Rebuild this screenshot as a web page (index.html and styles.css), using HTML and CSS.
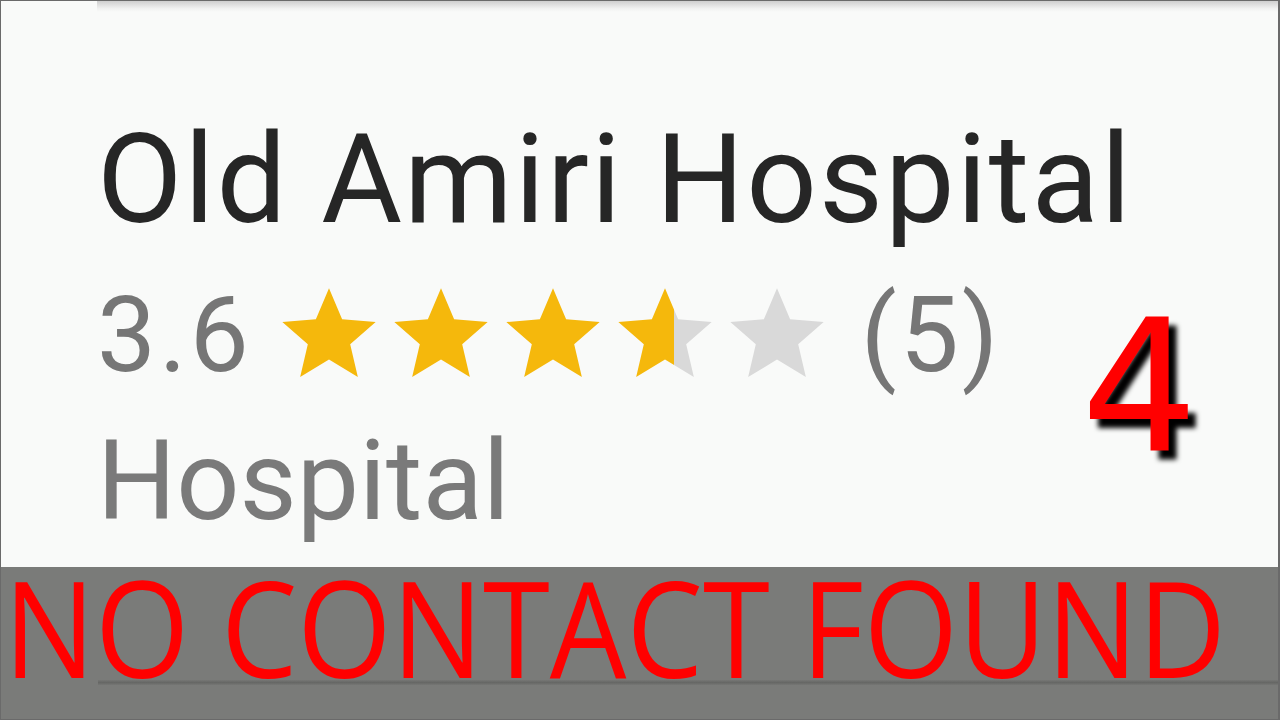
FILE: index.html
```html
<!DOCTYPE html>
<html>
	<head>
		<title>Old Amiri Hospital</title>
		<link rel="stylesheet" href="styles.css">
	</head>
	<body>
		<div class="screen">
			<div class="card">
				<div class="card-edge"></div>
				<h1 class="name">Old Amiri Hospital</h1>
				<div class="rating">
					<span class="score">3.6</span>
					<span class="stars">
						<svg class="star" viewBox="0 0 24 24"><path class="on" d="M12 17.27L18.180 21l-1.64-7.03L22 9.24l-7.19-.61L12 2 9.19 8.63 2 9.24l5.46 4.73L5.82 21z"/></svg>
						<svg class="star" viewBox="0 0 24 24"><path class="on" d="M12 17.27L18.18 21l-1.64-7.03L22 9.24l-7.19-.61L12 2 9.19 8.63 2 9.24l5.46 4.73L5.82 21z"/></svg>
						<svg class="star" viewBox="0 0 24 24"><path class="on" d="M12 17.27L18.18 21l-1.64-7.03L22 9.24l-7.19-.61L12 2 9.19 8.63 2 9.24l5.46 4.73L5.82 21z"/></svg>
						<svg class="star" viewBox="0 0 24 24">
							<defs>
								<linearGradient id="part" x1="0" y1="0" x2="1" y2="0">
									<stop offset="0.6" stop-color="#f5b80c"/>
									<stop offset="0.6" stop-color="#d9d9d9"/>
								</linearGradient>
							</defs>
							<path fill="url(#part)" d="M12 17.27L18.18 21l-1.64-7.03L22 9.24l-7.19-.61L12 2 9.19 8.63 2 9.24l5.46 4.73L5.82 21z"/>
						</svg>
						<svg class="star" viewBox="0 0 24 24"><path class="off" d="M12 17.27L18.18 21l-1.64-7.03L22 9.24l-7.19-.61L12 2 9.19 8.63 2 9.24l5.46 4.73L5.82 21z"/></svg>
					</span>
					<span class="count">(5)</span>
				</div>
				<div class="category">Hospital</div>
				<div class="rank">4</div>
			</div>
			<div class="banner">
				<div class="banner-text">NO CONTACT FOUND</div>
				<div class="banner-line"></div>
			</div>
		</div>
	</body>
</html>
```

FILE: styles.css
```css
body{
	margin: 0;
	background: #f9faf9;
}
.screen{
	position: relative;
	width: 1280px;
	height: 720px;
	box-sizing: border-box;
	border: 1px solid #6a6a6a;
	border-right-width: 2px;
	background: #f9faf9;
	display: flex;
	flex-direction: column;
	overflow: hidden;
}
.card{
	position: relative;
	flex: 1;
	padding-left: 96px;
	font-family: Roboto, "Liberation Sans", sans-serif;
}
.card-edge{
	height: 11px;
	background: linear-gradient(#cfcfcf, rgba(230,230,230,0.4) 70%, rgba(249,250,249,0));
}
.name{
	margin: 106px 0 0 0;
	font-size: 124px;
	line-height: 1;
	font-weight: 400;
	letter-spacing: 2px;
	color: #262626;
}
.rating{
	display: flex;
	align-items: center;
	margin-top: 37px;
	color: #767676;
	font-size: 105px;
	line-height: 1;
}
.score, .count{
	letter-spacing: 3px;
}
.stars{
	display: flex;
	margin: 0 28px 0 21px;
}
.star{
	width: 112px;
	height: 112px;
	display: block;
}
.star .on{
	fill: #f5b80c;
}
.star .off{
	fill: #d9d9d9;
}
.category{
	margin-top: 35px;
	font-size: 111px;
	line-height: 1;
	color: #7a7a7a;
}
.rank{
	position: absolute;
	left: 1080px;
	top: 294px;
	font-family: "DejaVu Sans", sans-serif;
	font-size: 184px;
	line-height: 1;
	color: #ff0000;
	text-shadow: 8px 9px 5px #000;
}
.banner{
	position: relative;
	height: 152px;
	flex-shrink: 0;
	background: #7a7b79;
}
.banner-text{
	font-family: "Open Sans", "Noto Sans", sans-serif;
	font-size: 133px;
	line-height: 0.9;
	color: #ff0000;
	white-space: nowrap;
	padding-left: 3px;
	transform: scaleX(0.912);
	transform-origin: left center;
}
.banner-line{
	position: absolute;
	left: 97px;
	right: 0;
	top: 113px;
	height: 5px;
	background: linear-gradient(rgba(100,101,99,0.2), rgba(100,101,99,0.9), rgba(100,101,99,0.2));
}
```
